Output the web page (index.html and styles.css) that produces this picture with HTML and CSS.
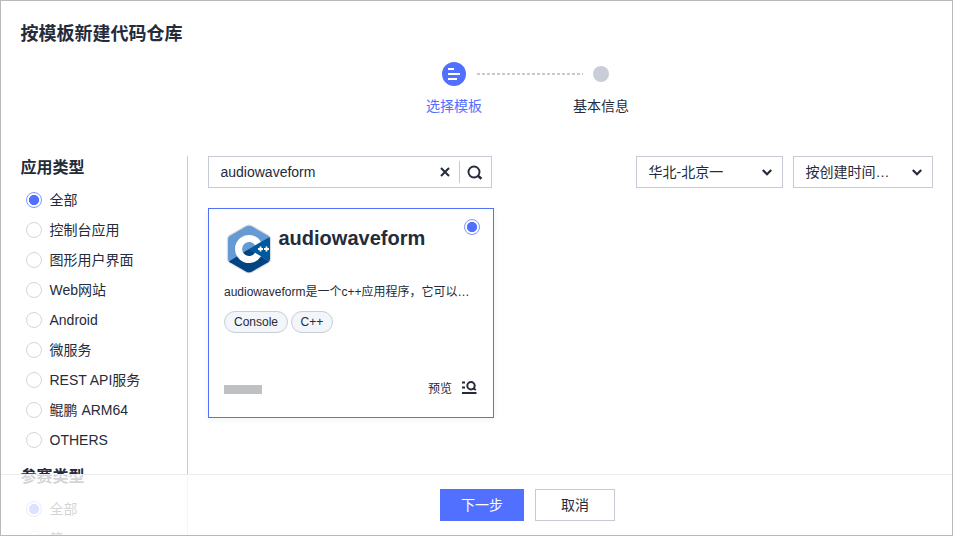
FILE: index.html
```html
<!DOCTYPE html>
<html lang="zh-CN">
<head>
<meta charset="utf-8">
<title>按模板新建代码仓库</title>
<link rel="stylesheet" href="styles.css">
</head>
<body>
<div class="page">
  <h1 class="title">按模板新建代码仓库</h1>
  <div class="steps">
    <div class="step active">
      <div class="mark"><svg width="24" height="24" viewBox="0 0 24 24"><circle cx="12" cy="12" r="12" fill="#5170ff"/><path d="M6 7h6M6 12h12M6 17h9" stroke="#fff" stroke-width="2"/></svg></div>
      <span>选择模板</span>
    </div>
    <svg class="line" width="106" height="2"><path d="M0 1h106" stroke="#c5cad4" stroke-width="2" stroke-dasharray="3 2"/></svg>
    <div class="step">
      <div class="mark"><i class="dot"></i></div>
      <span>基本信息</span>
    </div>
  </div>
  <div class="content">
    <aside class="sidebar">
      <h2>应用类型</h2>
      <ul>
        <li><i class="radio on"></i>全部</li>
        <li><i class="radio"></i>控制台应用</li>
        <li><i class="radio"></i>图形用户界面</li>
        <li><i class="radio"></i>Web网站</li>
        <li><i class="radio"></i>Android</li>
        <li><i class="radio"></i>微服务</li>
        <li><i class="radio"></i>REST API服务</li>
        <li><i class="radio"></i>鲲鹏 ARM64</li>
        <li><i class="radio"></i>OTHERS</li>
      </ul>
      <h2 class="second">参赛类型</h2>
      <ul>
        <li><i class="radio on"></i>全部</li>
        <li><i class="radio"></i>第</li>
      </ul>
    </aside>
    <main class="main">
      <div class="toolbar">
        <div class="search">
          <span class="query">audiowaveform</span>
          <svg width="10" height="10" viewBox="0 0 10 10"><path d="M1 1l8 8M9 1L1 9" stroke="#252b3a" stroke-width="2"/></svg>
          <i class="divider"></i>
          <svg width="16" height="16" viewBox="0 0 16 16" fill="none" stroke="#252b3a" stroke-width="1.900"><circle cx="7" cy="8" r="5.500"/><path d="M10.800 11.600l3.600 3.200" stroke-width="2.600"/></svg>
        </div>
        <div class="select region"><span>华北-北京一</span><svg width="10" height="8" viewBox="0 0 10 8"><path d="M.8 2L5 6.200l4.200-4.200" fill="none" stroke="#252b3a" stroke-width="2.200"/></svg></div>
        <div class="select sort"><span>按创建时间…</span><svg width="10" height="8" viewBox="0 0 10 8"><path d="M.8 2L5 6.200l4.200-4.200" fill="none" stroke="#252b3a" stroke-width="2.200"/></svg></div>
      </div>
      <article class="card">
        <div class="card-head">
          <svg class="logo" width="46" height="50" viewBox="0 0 46 50">
            <defs><clipPath id="hex"><path d="M20.500 2.300Q23 1 25.500 2.300L42 11.700Q44 13 44 15.500V34.500Q44 37 42 38.300L25.500 47.700Q23 49 20.500 47.700L4 38.300Q2 37 2 34.500V15.500Q2 13 4 11.700Z"/></clipPath></defs>
            <path d="M20.500 2.300Q23 1 25.500 2.300L42 11.700Q44 13 44 15.500V34.500Q44 37 42 38.300L25.500 47.700Q23 49 20.500 47.700L4 38.300Q2 37 2 34.500V15.500Q2 13 4 11.700Z" fill="none" stroke="#d9dcdf" stroke-width="2.400"/>
            <g clip-path="url(#hex)">
              <path d="M0 0h46v50H0z" fill="#659ad2"/>
              <path d="M23 25L46 11.500V39z" fill="#00599c"/>
              <path d="M2 38L23 25l21 13v12H2z" fill="#004482"/>
            </g>
            <path d="M32 19.500A10.500 10.500 0 1 0 32 30.500" fill="none" stroke="#fff" stroke-width="7"/>
            <path d="M32 25h5M34.500 22.500v5M38 25h5M40.500 22.500v5" stroke="#fff" stroke-width="1.800"/>
          </svg>
          <h3>audiowaveform</h3>
          <i class="radio on"></i>
        </div>
        <p class="desc">audiowaveform是一个c++应用程序，它可以…</p>
        <div class="tags"><span>Console</span><span>C++</span></div>
        <div class="card-foot">
          <div class="masked"></div>
          <div class="preview">预览<svg width="15" height="13" viewBox="0 0 15 13" fill="none" stroke="#252b3a"><path d="M0 1.500h3M0 6.500h3M0 12h14.500" stroke-width="2"/><circle cx="9" cy="4.700" r="3.700" stroke-width="2"/><path d="M11 7l2.800 2" stroke-width="2"/></svg></div>
        </div>
      </article>
    </main>
  </div>
  <footer class="footer"><button class="primary">下一步</button><button>取消</button></footer>
</div>
</body>
</html>
```

FILE: styles.css
```css
* { box-sizing: border-box; }
body {
  margin: 0;
  color: #252b3a;
  font: 14px/20px "Liberation Sans", "Noto Sans CJK SC", sans-serif;
}
h1, h2, h3, p, ul { margin: 0; padding: 0; }
.page {
  position: relative;
  height: 536px;
  overflow: hidden;
  border: 1px solid #b9b9b9;
  background: #fff;
}
.title { padding: 21px 0 0 19.500px; font-size: 18px; line-height: 24px; }
.steps { display: flex; height: 110px; padding: 16px 0 0 424px; }
.step { width: 58px; display: flex; flex-direction: column; align-items: center; gap: 10px; white-space: nowrap; }
.mark { height: 24px; display: flex; align-items: center; }
.mark svg { display: block; }
.step.active { color: #526fff; }
.line { margin: 11px -11px 0 -6px; flex: none; }
.dot { width: 16px; height: 16px; border-radius: 50%; background: #c9cdd7; }
.content { display: flex; padding: 0 19px 0 20px; }
.sidebar { width: 167px; height: 381px; border-right: 1px solid #c5cad4; flex: none; }
h2 { padding-top: 1px; margin-left: -.5px; font-size: 16px; line-height: 22px; }
ul { list-style: none; padding: 6px 0 0 5px; }
li { display: flex; align-items: center; gap: 7.500px; height: 30px; white-space: nowrap; }
.radio { display: block; width: 16px; height: 16px; flex: none; border: 1px solid #d3d6df; border-radius: 50%; }
.radio.on { border-color: #7e95ff; background: radial-gradient(circle, #5170ff 0 4.700px, #fff 5.500px); }
.second { margin-top: 10px; }
.main { flex: 1; padding-left: 20px; }
.toolbar { display: flex; height: 32px; }
.search { display: flex; align-items: center; width: 284px; margin-right: auto; padding: 0 8px 0 11.500px; border: 1px solid #c5cad4; }
.query { flex: 1; }
.divider { width: 1px; height: 22px; background: #c5cad4; margin: 0 7px 0 9px; }
.select { display: flex; align-items: center; justify-content: space-between; padding: 0 10px 0 11.500px; border: 1px solid #c5cad4; white-space: nowrap; }
.region { width: 147px; }
.sort { width: 140px; margin-left: 10px; }
.card { width: 286px; height: 210px; margin-top: 20px; padding: 14px 13px 0 15px; border: 1px solid #5170ff; box-shadow: 0 2px 6px rgba(37, 43, 58, .06); }
.card-head { display: flex; height: 60px; }
.card-head .logo { margin: 1px 0 0 2px; }
h3 { flex: 1; margin: 3px 0 0 6.500px; font-size: 20px; line-height: 24px; }
.card-head .radio { margin-top: -4px; }
.desc { font-size: 12px; line-height: 18px; white-space: nowrap; }
.tags { display: flex; gap: 3px; margin-top: 10px; font-size: 12px; }
.tags span { height: 22px; line-height: 20px; padding: 0 9px; border: 1px solid #c9cdd7; border-radius: 11px; background: #f2f5f9; }
.tags span + span { padding: 0 8.500px; }
.card-foot { display: flex; justify-content: space-between; align-items: center; margin-top: 46px; padding-right: 3px; }
.masked { width: 38px; height: 9px; background: #bec1c3; }
.preview { display: flex; align-items: center; gap: 10px; font-size: 12px; line-height: 20px; }
.preview svg { margin-top: -3px; }
.footer { position: absolute; left: 0; right: 0; bottom: 0; height: 61px; padding: 14px 0 14px 102px; display: flex; justify-content: center; gap: 11px; border-top: 1px solid #ebedf0; background: rgba(255, 255, 255, .8); }
button { width: 80px; height: 32px; padding: 0; border: 1px solid #c5cad4; background: #fff; color: inherit; font: inherit; }
.primary { width: 84px; border: 0; background: #5170ff; color: #fff; }
```
